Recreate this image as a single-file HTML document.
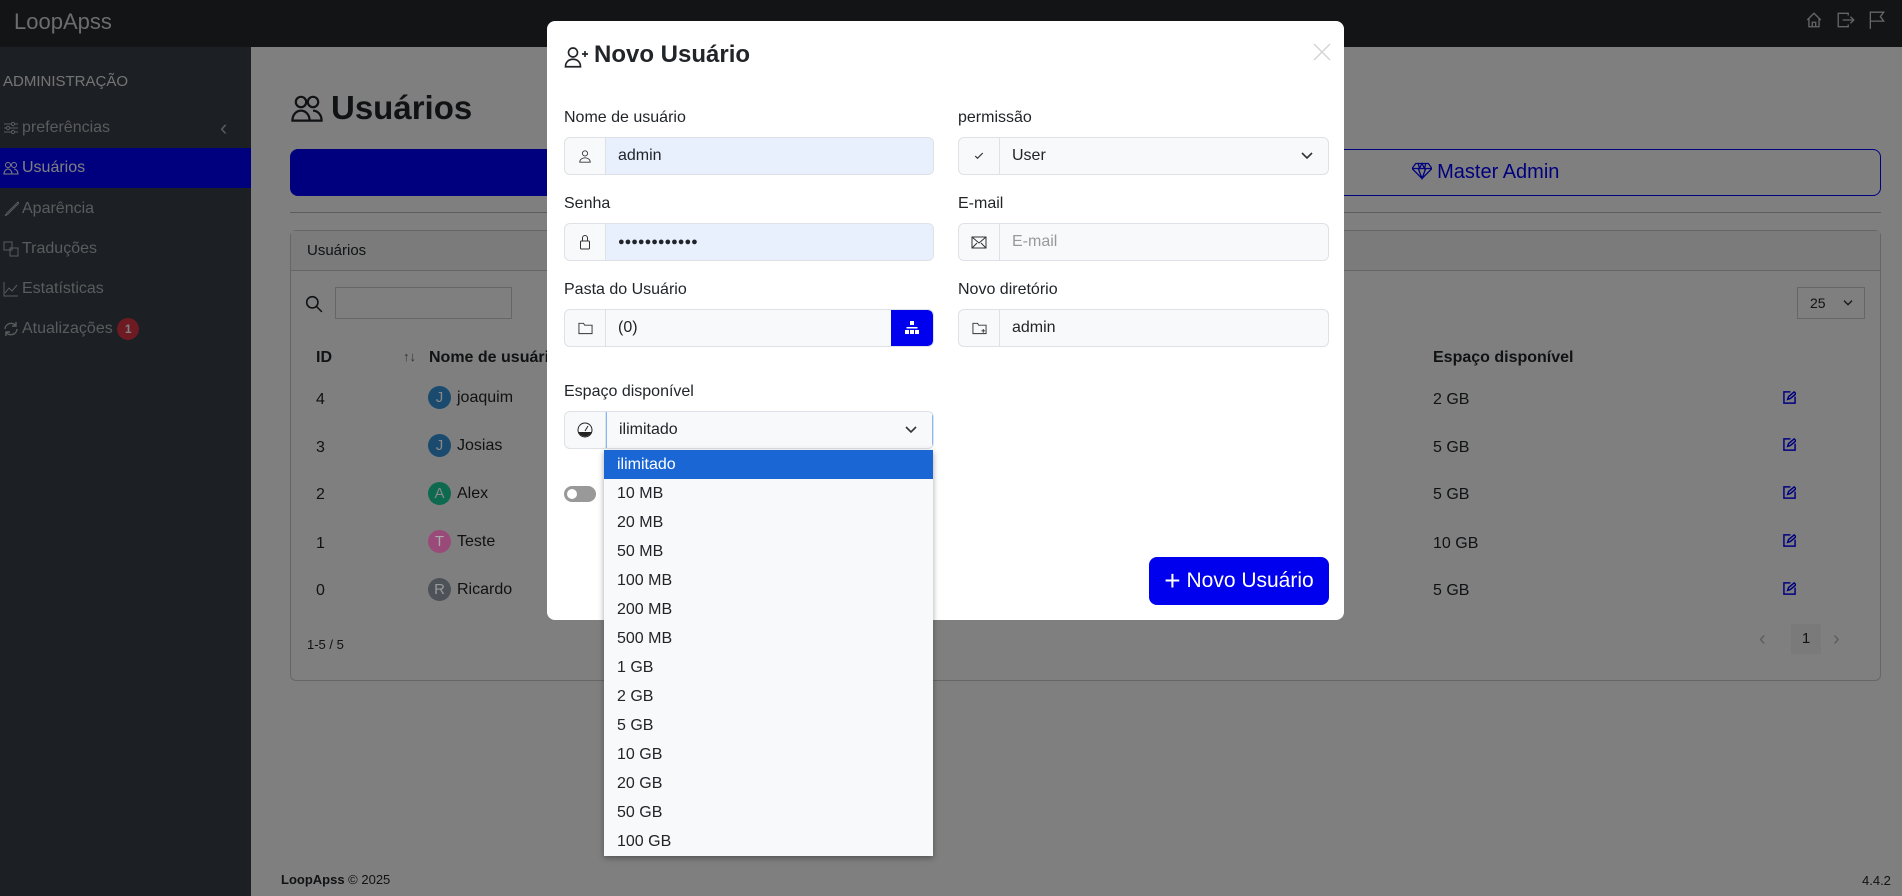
<!DOCTYPE html>
<html><head><meta charset="utf-8">
<style>
*{box-sizing:border-box;margin:0;padding:0}
body{width:1902px;height:896px;overflow:hidden;font-family:"Liberation Sans",sans-serif;font-size:16px;color:#212529;background:#fff;position:relative}
.abs{position:absolute}
.nav{left:0;top:0;width:1902px;height:47px;background:#26282d}
.side{left:0;top:47px;width:251px;height:849px;background:#383e46}
.side .it{position:absolute;left:0;width:251px;height:40px;line-height:40px;padding-left:22px;color:#b4b7bb;font-size:16px}
.side svg{position:absolute;left:3px;top:12px}
.main{left:251px;top:47px;width:1651px;height:849px;background:#fff}
.overlay{left:0;top:0;width:1902px;height:896px;background:rgba(0,0,0,.5)}
.modal{left:547px;top:21px;width:797px;height:599px;background:#fff;border-radius:8px}
.lbl{position:absolute;font-size:16px;color:#212529}
.ig{position:absolute;height:38px;border:1px solid #dee2e6;border-radius:6px;background:#f8f9fa;overflow:hidden}
.ig .ic{position:absolute;left:0;top:0;width:41px;height:36px;border-right:1px solid #dee2e6;display:flex;align-items:center;justify-content:center}
.ig .v{position:absolute;left:41px;top:0;right:0;height:36px;line-height:36px;padding-left:12px;font-size:16px}
.dd{left:604px;top:450px;width:329px;height:406px;background:#f8f9fa;box-shadow:0 2px 6px rgba(0,0,0,.35)}
.dd div{height:29px;line-height:29px;padding-left:13px;font-size:16px;color:#212529}
.nm{position:absolute;left:457px;color:#111;line-height:23px}
</style></head><body>
<div class="abs nav">
 <div class="abs" style="left:14px;top:9px;font-size:22px;color:#d6d8da">LoopApss</div>
 <svg class="abs" style="left:1805px;top:11px" width="18" height="18" viewBox="0 0 16 16" fill="none" stroke="#ccc" stroke-width="1.2"><path d="M2 8 8 2l6 6M3.5 6.5V14h9V6.5M6.5 14v-4h3v4"/></svg>
 <svg class="abs" style="left:1836px;top:11px" width="20" height="18" viewBox="0 0 18 16" fill="none" stroke="#ccc" stroke-width="1.2"><path d="M11 4V2H2v12h9v-2M6 8h10M13 5l3 3-3 3"/></svg>
 <svg class="abs" style="left:1868px;top:10px" width="18" height="20" viewBox="0 0 16 18" fill="none" stroke="#ccc" stroke-width="1.2"><path d="M2 17V2h12l-3 4 3 4H2"/></svg>
</div>
<div class="abs side">
 <div class="abs" style="left:3px;top:26px;font-size:15px;color:#e8e8e8">ADMINISTRAÇÃO</div>
 <div class="it" style="top:61px">preferências<svg width="16" height="16" viewBox="0 0 16 16" fill="none" stroke="#b4b7bb"><path d="M1 4h14M1 8h14M1 12h14"/><circle cx="10" cy="4" r="1.6" fill="#383e46"/><circle cx="5" cy="8" r="1.6" fill="#383e46"/><circle cx="10" cy="12" r="1.6" fill="#383e46"/></svg><span style="position:absolute;left:220px;top:0;font-size:22px">‹</span></div>
 <div class="it" style="top:101px;background:#0000ff;color:#fff">Usuários<svg width="16" height="16" viewBox="0 0 16 16" fill="none" stroke="#fff"><circle cx="5" cy="5" r="2.5"/><circle cx="11" cy="5" r="2.5"/><path d="M1 14c0-3 2-5 4-5s4 2 4 5zM9 14h6c0-3-2-5-4-5"/></svg></div>
 <div class="it" style="top:142px">Aparência<svg width="16" height="16" viewBox="0 0 16 16" fill="none" stroke="#b4b7bb"><path d="M15 1 4 12l-2 3 3-2L16 2z"/></svg></div>
 <div class="it" style="top:182px">Traduções<svg width="16" height="16" viewBox="0 0 16 16" fill="none" stroke="#b4b7bb"><rect x="1" y="1" width="8" height="8"/><rect x="7" y="7" width="8" height="8"/></svg></div>
 <div class="it" style="top:222px">Estatísticas<svg width="16" height="16" viewBox="0 0 16 16" fill="none" stroke="#b4b7bb"><path d="M1 1v14h14M2 12l4-5 3 3 5-6"/></svg></div>
 <div class="it" style="top:262px">Atualizações <span style="display:inline-block;width:22px;height:22px;border-radius:11px;background:#dc3545;color:#fff;font-size:12px;line-height:22px;text-align:center;font-weight:bold;vertical-align:middle">1</span><svg width="16" height="16" viewBox="0 0 16 16" fill="none" stroke="#b4b7bb" stroke-width="1.4"><path d="M2 8a6 6 0 0 1 11-3M14 8a6 6 0 0 1-11 3M13 1v4h-4M3 15v-4h4"/></svg></div>
 <div class="abs" style="left:252px;top:836px;width:0;height:0;border:5px solid transparent;border-top-color:#aaa"></div>
</div>
<div class="abs main">
 <svg class="abs" style="left:40px;top:47px" width="32" height="28" viewBox="0 0 16 14" fill="none" stroke="#212529" stroke-width="1.1"><circle cx="5" cy="4" r="2.6"/><circle cx="11" cy="4" r="2.6"/><path d="M.7 13.3c0-3 2-5 4.3-5s4.3 2 4.3 5zM9.3 13.3h6c0-3-2-5-4.3-5"/></svg>
 <div class="abs" style="left:80px;top:42px;font-size:33px;font-weight:bold">Usuários</div>
 <div class="abs" style="left:39px;top:102px;width:800px;height:47px;background:#0000ff;border-radius:8px"></div>
 <div class="abs" style="left:839px;top:102px;width:791px;height:47px;border:1px solid #0000ff;border-radius:8px;color:#0000ff;font-size:20px;text-align:center;line-height:45px"><svg width="20" height="18" viewBox="0 0 16 14" fill="none" stroke="#0000ff" style="vertical-align:-2px"><path d="M3 1h10l3 4-8 8-8-8zM0 5h16M5 5l3 8 3-8M5 1l1 4 2-4 2 4 1-4"/></svg> Master Admin</div>
 <div class="abs" style="left:39px;top:165px;width:1591px;border-top:1px solid #bbb"></div>
 <div class="abs" style="left:39px;top:183px;width:1591px;height:451px;border:1px solid #ccc;border-radius:6px">
  <div style="height:40px;border-bottom:1px solid #ccc;background:#f7f7f7;line-height:40px;padding-left:16px;font-size:15px">Usuários</div>
  <svg class="abs" style="left:14px;top:64px" width="18" height="18" viewBox="0 0 16 16" fill="none" stroke="#212529" stroke-width="1.4"><circle cx="6.5" cy="6.5" r="5"/><path d="M10 10l5 5"/></svg>
  <div class="abs" style="left:44px;top:56px;width:177px;height:32px;border:1px solid #ccc"></div>
  <div class="abs" style="left:1506px;top:56px;width:68px;height:32px;border:1px solid #ccc;font-size:14px;line-height:30px;padding-left:12px">25 <svg style="position:absolute;left:44px;top:11px" width="12" height="8" viewBox="0 0 14 10" fill="none" stroke="#333" stroke-width="1.8"><path d="M2 2l5 5 5-5"/></svg></div>
  <div class="abs" style="left:25px;top:118px;font-weight:bold">ID</div>
  <div class="abs" style="left:112px;top:118px;font-size:13px;color:#666">↑↓</div>
  <div class="abs" style="left:138px;top:118px;font-weight:bold">Nome de usuário</div>
  <div class="abs" style="left:1142px;top:118px;font-weight:bold">Espaço disponível</div>
  <div class="abs" style="left:25px;top:158px;line-height:22px">4</div>
  <div class="abs" style="left:25px;top:206px;line-height:22px">3</div>
  <div class="abs" style="left:25px;top:253px;line-height:22px">2</div>
  <div class="abs" style="left:25px;top:302px;line-height:22px">1</div>
  <div class="abs" style="left:25px;top:349px;line-height:22px">0</div>
  <div class="abs" style="left:1142px;top:158px;line-height:22px">2 GB</div>
  <div class="abs" style="left:1142px;top:206px;line-height:22px">5 GB</div>
  <div class="abs" style="left:1142px;top:253px;line-height:22px">5 GB</div>
  <div class="abs" style="left:1142px;top:302px;line-height:22px">10 GB</div>
  <div class="abs" style="left:1142px;top:349px;line-height:22px">5 GB</div>
  <div class="abs" style="left:16px;top:406px;font-size:13px">1-5 / 5</div>
  <div class="abs" style="left:1500px;top:393px;width:30px;height:30px;background:#f4f4f4;text-align:center;line-height:30px;font-size:15px">1</div>
  <div class="abs" style="left:1468px;top:397px;color:#bbb;font-size:20px">‹</div><div class="abs" style="left:1542px;top:397px;color:#bbb;font-size:20px">›</div>
 </div>
 <div class="abs" style="left:30px;top:825px;font-size:13px"><b>LoopApss</b> © 2025</div>
 <div class="abs" style="left:1611px;top:826px;font-size:13px">4.4.2</div>
</div>
<div class="abs overlay"></div>
<div class="abs modal">
 <svg class="abs" style="left:17px;top:25px" width="24" height="22" viewBox="0 0 16 14" fill="none" stroke="#212529" stroke-width="1.1"><circle cx="6" cy="4" r="3"/><path d="M1 13.5c0-3 2-5 5-5s5 2 5 5zM12 5h4M14 3v4"/></svg>
 <div class="abs" style="left:47px;top:20px;font-size:24px;font-weight:bold">Novo Usuário</div>
 <svg class="abs" style="left:766px;top:22px" width="18" height="18" viewBox="0 0 18 18" stroke="#d5d5d5" stroke-width="1.5"><path d="M1 1l16 16M17 1 1 17"/></svg>
 <div class="lbl" style="left:17px;top:88px">Nome de usuário</div>
 <div class="lbl" style="left:411px;top:88px">permissão</div>
 <div class="ig" style="left:17px;top:116px;width:370px"><div class="ic"><svg width="14" height="14" viewBox="0 0 16 16" fill="none" stroke="#333"><circle cx="8" cy="5" r="3"/><path d="M2 15c0-3 3-5 6-5s6 2 6 5z"/></svg></div><div class="v" style="background:#e8f0fe">admin</div></div>
 <div class="ig" style="left:411px;top:116px;width:371px"><div class="ic"><svg width="12" height="12" viewBox="0 0 16 16" fill="none" stroke="#333" stroke-width="1.6"><path d="M3 8l3 3 7-7"/></svg></div><div class="v">User<svg style="position:absolute;right:14px;top:13px" width="14" height="10" viewBox="0 0 14 10" fill="none" stroke="#333" stroke-width="1.6"><path d="M2 2l5 5 5-5"/></svg></div></div>
 <div class="lbl" style="left:17px;top:174px">Senha</div>
 <div class="lbl" style="left:411px;top:174px">E-mail</div>
 <div class="ig" style="left:17px;top:202px;width:370px"><div class="ic"><svg width="12" height="16" viewBox="0 0 12 16" fill="none" stroke="#333"><rect x="1.5" y="7" width="9" height="8" rx="1"/><path d="M3.5 7V4a2.5 2.5 0 0 1 5 0v3"/></svg></div><div class="v" style="background:#e8f0fe;font-size:11px;letter-spacing:0px">●●●●●●●●●●●●</div></div>
 <div class="ig" style="left:411px;top:202px;width:371px"><div class="ic"><svg width="16" height="13" viewBox="0 0 16 13" fill="none" stroke="#333"><rect x="1" y="1" width="14" height="11"/><path d="M1 1l7 6 7-6M1 12l5-5M15 12l-5-5"/></svg></div><div class="v" style="color:#999">E-mail</div></div>
 <div class="lbl" style="left:17px;top:260px">Pasta do Usuário</div>
 <div class="lbl" style="left:411px;top:260px">Novo diretório</div>
 <div class="ig" style="left:17px;top:288px;width:370px"><div class="ic"><svg width="15" height="14" viewBox="0 0 16 14" fill="none" stroke="#333"><path d="M1 2h5l1 2h8v9H1z"/></svg></div><div class="v">(0)</div><div style="position:absolute;right:0;top:0;width:42px;height:36px;background:#0000ee;border-radius:0 5px 5px 0"><svg style="position:absolute;left:14px;top:11px" width="14" height="14" viewBox="0 0 14 14" fill="#fff"><rect x="5" y="0" width="4" height="4"/><rect x="0" y="9" width="4" height="4"/><rect x="5" y="9" width="4" height="4"/><rect x="10" y="9" width="4" height="4"/><rect x="1.5" y="6" width="11" height="1.5"/></svg></div></div>
 <div class="ig" style="left:411px;top:288px;width:371px"><div class="ic"><svg width="15" height="14" viewBox="0 0 16 14" fill="none" stroke="#333"><path d="M1 2h5l1 2h8v9H1zM12 8v4M10 10h4"/></svg></div><div class="v">admin</div></div>
 <div class="lbl" style="left:17px;top:362px">Espaço disponível</div>
 <div class="ig" style="left:17px;top:390px;width:370px"><div class="ic"><svg width="16" height="16" viewBox="0 0 16 16"><circle cx="8" cy="8" r="7" fill="none" stroke="#222"/><path d="M1.5 10h13a7 7 0 0 1-13 0z" fill="#222"/><path d="M8 9l3-5" stroke="#222"/></svg></div><div class="v" style="border:1px solid #86b7fe;top:-1px;height:38px;line-height:36px">ilimitado<svg style="position:absolute;right:14px;top:13px" width="14" height="10" viewBox="0 0 14 10" fill="none" stroke="#333" stroke-width="1.6"><path d="M2 2l5 5 5-5"/></svg></div></div>
 <div class="abs" style="left:17px;top:465px;width:32px;height:16px;border-radius:8px;background:#999"><div style="position:absolute;left:3px;top:3px;width:10px;height:10px;border-radius:5px;background:#fff"></div></div>
 <div class="abs" style="left:602px;top:536px;width:180px;height:48px;background:#0000ee;border-radius:8px;color:#fff;font-size:21px;line-height:48px;text-align:center"><span style="font-size:28px;vertical-align:-3px">+</span> Novo Usuário</div>
</div>
<div class="abs dd">
 <div style="background:#1a66d4;color:#fff">ilimitado</div>
 <div>10 MB</div><div>20 MB</div><div>50 MB</div><div>100 MB</div><div>200 MB</div><div>500 MB</div><div>1 GB</div><div>2 GB</div><div>5 GB</div><div>10 GB</div><div>20 GB</div><div>50 GB</div><div>100 GB</div>
</div>
<div class="abs" style="left:428px;top:386px;width:23px;height:23px;border-radius:12px;background:#1a4a6e;color:#888;text-align:center;line-height:23px;font-size:15px">J</div>
<div class="nm" style="top:386px">joaquim</div>
<div class="abs" style="left:428px;top:434px;width:23px;height:23px;border-radius:12px;background:#1a4a6e;color:#888;text-align:center;line-height:23px;font-size:15px">J</div>
<div class="nm" style="top:434px">Josias</div>
<div class="abs" style="left:428px;top:482px;width:23px;height:23px;border-radius:12px;background:#0e6a4f;color:#888;text-align:center;line-height:23px;font-size:15px">A</div>
<div class="nm" style="top:482px">Alex</div>
<div class="abs" style="left:428px;top:530px;width:23px;height:23px;border-radius:12px;background:#9a4a78;color:#aaa;text-align:center;line-height:23px;font-size:15px">T</div>
<div class="nm" style="top:530px">Teste</div>
<div class="abs" style="left:428px;top:578px;width:23px;height:23px;border-radius:12px;background:#4c5257;color:#999;text-align:center;line-height:23px;font-size:15px">R</div>
<div class="nm" style="top:578px">Ricardo</div>
<svg class="abs" style="left:1783px;top:391px" width="13" height="13" viewBox="0 0 14 14" fill="none" stroke="#000080" stroke-width="1.6"><path d="M8 1H1v12h12V6M5 9l1-3 6-5 2 2-6 5z"/></svg>
<svg class="abs" style="left:1783px;top:438px" width="13" height="13" viewBox="0 0 14 14" fill="none" stroke="#000080" stroke-width="1.6"><path d="M8 1H1v12h12V6M5 9l1-3 6-5 2 2-6 5z"/></svg>
<svg class="abs" style="left:1783px;top:486px" width="13" height="13" viewBox="0 0 14 14" fill="none" stroke="#000080" stroke-width="1.6"><path d="M8 1H1v12h12V6M5 9l1-3 6-5 2 2-6 5z"/></svg>
<svg class="abs" style="left:1783px;top:534px" width="13" height="13" viewBox="0 0 14 14" fill="none" stroke="#000080" stroke-width="1.6"><path d="M8 1H1v12h12V6M5 9l1-3 6-5 2 2-6 5z"/></svg>
<svg class="abs" style="left:1783px;top:582px" width="13" height="13" viewBox="0 0 14 14" fill="none" stroke="#000080" stroke-width="1.6"><path d="M8 1H1v12h12V6M5 9l1-3 6-5 2 2-6 5z"/></svg>
</body></html>
